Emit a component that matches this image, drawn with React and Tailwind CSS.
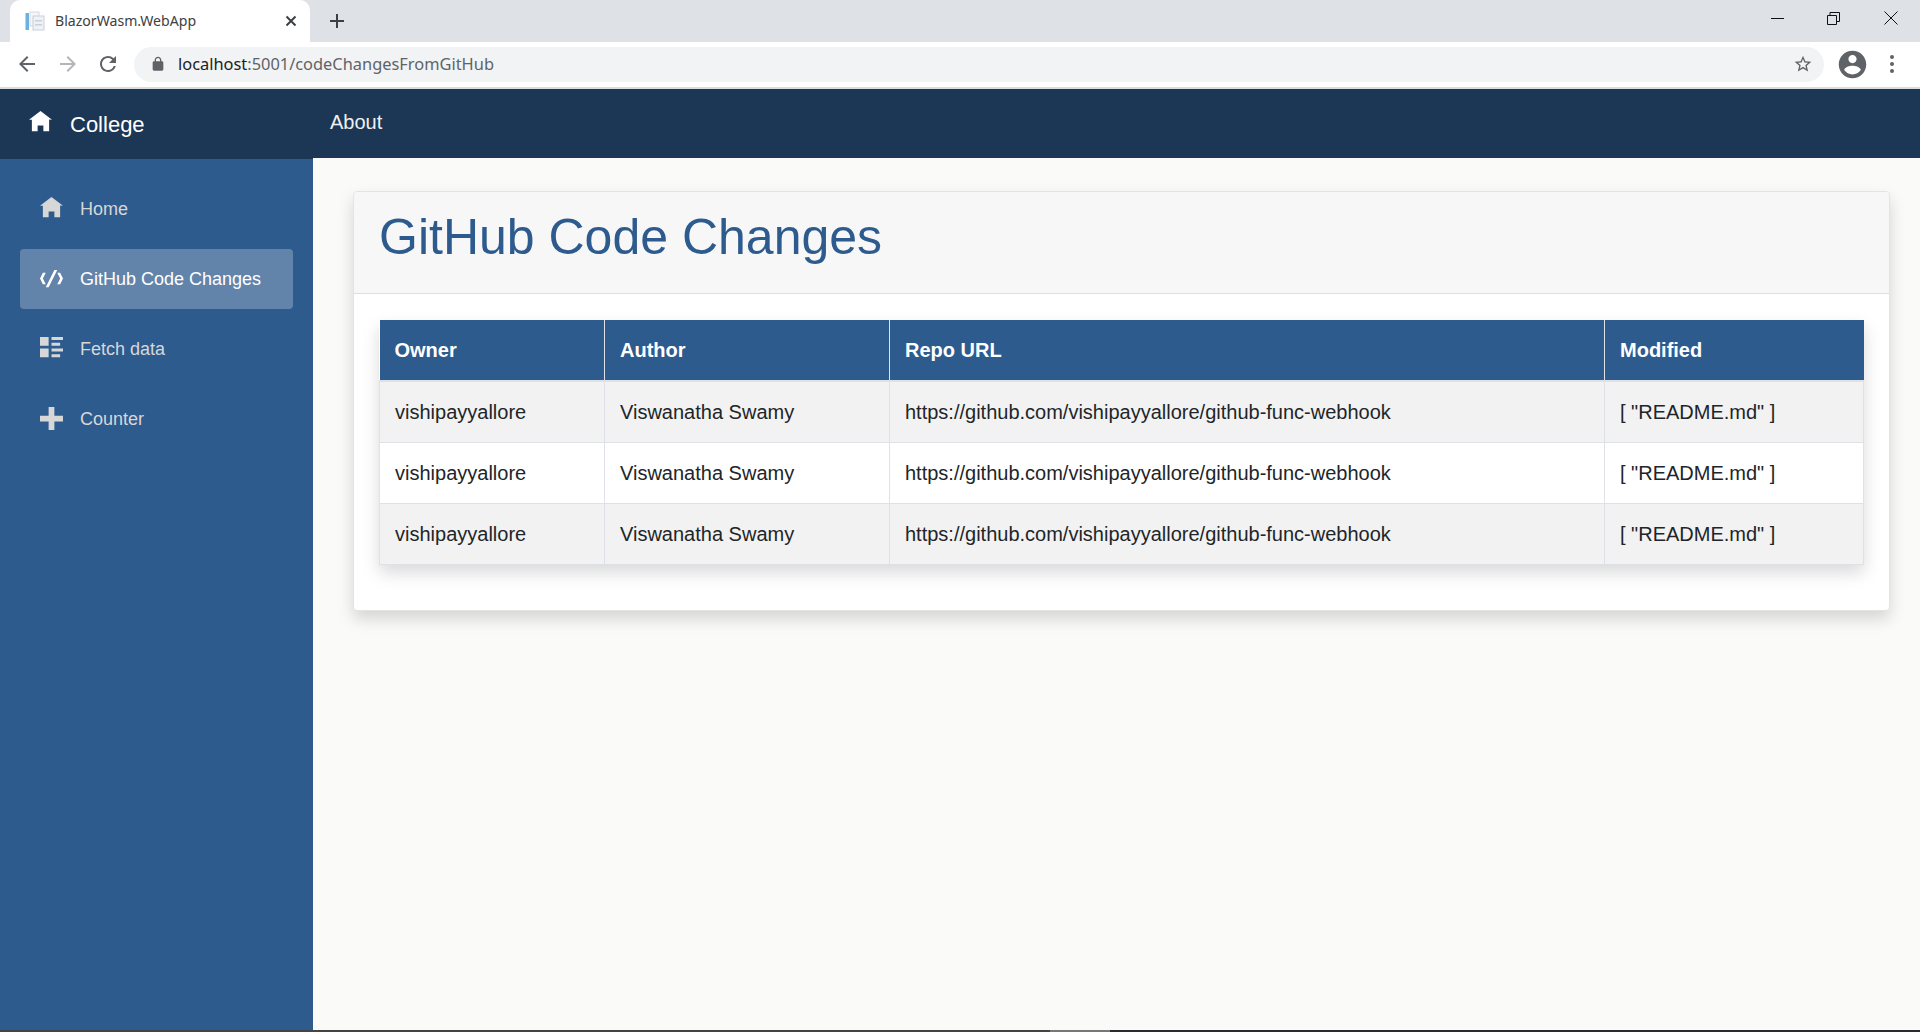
import React from 'react'

const rows = [
  { bg: 'bg-[#f2f2f2]' },
  { bg: 'bg-white' },
  { bg: 'bg-[#f2f2f2]' },
]

const navItems = [
  { label: 'Home', d: 'M4 0l-4 3h1v4h2v-2h2v2h2v-4.03l1 .03-4-3z' },
  { label: 'GitHub Code Changes', d: 'M5 0l-3 6h1l3-6h-1zm-4 1l-1 2 1 2h1l-1-2 1-2h-1zm5 0l1 2-1 2h1l1-2-1-2h-1z', active: true, code: true },
  { label: 'Fetch data', d: 'M0 0v3h3v-3h-3zm4 0v1h4v-1h-4zm0 2v1h3v-1h-3zm-4 2v3h3v-3h-3zm4 0v1h4v-1h-4zm0 2v1h3v-1h-3z' },
  { label: 'Counter', d: 'M3 0v3h-3v2h3v3h2v-3h3v-2h-3v-3h-2z' },
]

function Iconic({ d, className, code }) {
  return (
    <svg viewBox={code ? '0 -1 8 8' : '0 0 8 8'} className={className} fill="currentColor">
      <path d={d} />
    </svg>
  )
}

function Material({ d, className }) {
  return (
    <svg viewBox="0 0 24 24" className={className} fill="currentColor">
      <path d={d} />
    </svg>
  )
}

function BrowserChrome() {
  return (
    <div className="shrink-0 font-['Noto_Sans',sans-serif]">
      <div className="flex h-[42px] items-end bg-[#dee1e6]">
        <div className="ml-[10px] flex h-[42px] w-[300px] items-center rounded-t-[10px] bg-white pl-[15px] pr-[13px]">
          <svg viewBox="0 0 20 20" className="h-[20px] w-[20px] shrink-0">
            <rect x="0.5" y="2" width="3.5" height="17" fill="#6db1e3" />
            <rect x="5" y="1" width="9" height="14" fill="#f4f6f9" stroke="#d5dae1" strokeWidth="1" />
            <rect x="8" y="5" width="11" height="14" fill="#eef1f5" stroke="#c9d0d9" strokeWidth="1" />
            <rect x="10" y="9" width="7" height="1.5" fill="#c9d0d9" />
            <rect x="10" y="13" width="7" height="1.5" fill="#c9d0d9" />
          </svg>
          <span className="ml-[10px] flex-1 text-[14.1px] text-[#3c4043]">BlazorWasm.WebApp</span>
          <svg viewBox="0 0 12 12" className="h-[12px] w-[12px] text-[#3c4043]" fill="none" stroke="currentColor" strokeWidth="2">
            <path d="M1.5 1.5l9 9M10.5 1.5l-9 9" />
          </svg>
        </div>
        <div className="flex h-[42px] items-center pl-[19px]">
          <svg viewBox="0 0 16 16" className="h-[16px] w-[16px] text-[#3c4043]" fill="none" stroke="currentColor" strokeWidth="2">
            <path d="M8 1v14M1 8h14" />
          </svg>
        </div>
        <div className="ml-auto flex h-[42px] items-start pr-[1px] text-[#111]">
          <div className="flex h-[36px] w-[56px] items-center justify-center">
            <div className="h-px w-[13px] bg-current" />
          </div>
          <div className="flex h-[36px] w-[57px] items-center justify-center">
            <svg viewBox="0 0 13 13" className="h-[13px] w-[13px]" fill="none" stroke="currentColor">
              <path d="M0.5 3.5h9v9h-9zM3 3.5v-3h9.5v9h-3" />
            </svg>
          </div>
          <div className="flex h-[36px] w-[57px] items-center justify-center">
            <svg viewBox="0 0 14 14" className="h-[14px] w-[14px]" fill="none" stroke="currentColor">
              <path d="M0.5 0.5l13 13M13.5 0.5l-13 13" />
            </svg>
          </div>
        </div>
      </div>
      <div className="flex h-[47px] items-center border-b-2 border-[#dcdcdc] bg-white pb-[1px]">
        <Material className="ml-[15px] h-[24px] w-[24px] text-[#5f6368]" d="M20 11H7.83l5.59-5.59L12 4l-8 8 8 8 1.41-1.41L7.83 13H20v-2z" />
        <Material className="ml-[17px] h-[24px] w-[24px] rotate-180 text-[#b4b6b9]" d="M20 11H7.83l5.59-5.59L12 4l-8 8 8 8 1.41-1.41L7.83 13H20v-2z" />
        <Material className="ml-[16px] h-[24px] w-[24px] text-[#5f6368]" d="M17.65 6.35A7.96 7.96 0 0 0 12 4c-4.42 0-7.99 3.58-7.99 8s3.57 8 7.99 8c3.73 0 6.84-2.55 7.73-6h-2.08A5.99 5.99 0 0 1 12 18c-3.31 0-6-2.69-6-6s2.69-6 6-6c1.66 0 3.14.69 4.22 1.78L13 11h7V4l-2.35 2.35z" />
        <div className="ml-[14px] flex h-[35px] w-[1690px] items-center rounded-full bg-[#f1f3f4] pl-[16px] pr-[11px]">
          <Material className="h-[16px] w-[16px] text-[#5f6368]" d="M18 8h-1V6c0-2.76-2.24-5-5-5S7 3.24 7 6v2H6c-1.1 0-2 .9-2 2v10c0 1.1.9 2 2 2h12c1.1 0 2-.9 2-2V10c0-1.1-.9-2-2-2zM9 6c0-1.66 1.34-3 3-3s3 1.34 3 3v2H9V6z" />
          <span className="ml-[12px] mt-[1px] flex-1 text-[16.4px] text-[#5f6368]">
            <span className="text-[#202124]">localhost</span>:5001/codeChangesFromGitHub
          </span>
          <Material className="h-[20px] w-[20px] text-[#5f6368]" d="M22 9.24l-7.19-.62L12 2 9.19 8.63 2 9.24l5.46 4.73L5.82 21 12 17.27 18.18 21l-1.63-7.03L22 9.24zM12 15.4l-3.76 2.27 1-4.28-3.32-2.88 4.38-.38L12 6.1l1.71 4.04 4.38.38-3.32 2.88 1 4.28L12 15.4z" />
        </div>
        <Material className="ml-[12px] h-[33px] w-[33px] text-[#5f6368]" d="M12 2C6.48 2 2 6.48 2 12s4.48 10 10 10 10-4.48 10-10S17.52 2 12 2zm0 3c1.66 0 3 1.34 3 3s-1.34 3-3 3-3-1.34-3-3 1.34-3 3-3zm0 14.2c-2.5 0-4.71-1.28-6-3.22.03-1.99 4-3.08 6-3.08 1.99 0 5.97 1.09 6 3.08-1.29 1.94-3.5 3.22-6 3.22z" />
        <div className="ml-[21px] flex flex-col gap-[3px]">
          <div className="h-[4px] w-[4px] rounded-full bg-[#5f6368]" />
          <div className="h-[4px] w-[4px] rounded-full bg-[#5f6368]" />
          <div className="h-[4px] w-[4px] rounded-full bg-[#5f6368]" />
        </div>
      </div>
    </div>
  )
}

function Sidebar() {
  return (
    <aside className="flex w-[313px] shrink-0 flex-col border-t border-[#1c3655] bg-[#2d5b8e] pt-[20px]">
      <nav className="flex flex-col gap-[10px] px-[20px]">
        {navItems.map((item) => (
          <a
            key={item.label}
            className={`flex h-[60px] items-center rounded-[4px] pl-[20px] text-[18px] ${item.active ? 'bg-[#6384aa] text-white' : 'text-[#d7d7d7]'}`}
          >
            <Iconic d={item.d} code={item.code} className="-mt-[2px] h-[23px] w-[23px] shrink-0" />
            <span className="ml-[17px]">{item.label}</span>
          </a>
        ))}
      </nav>
    </aside>
  )
}

function CodeTable() {
  return (
    <table className="w-[1484px] table-fixed border-collapse text-[20px] text-[#212529] shadow-[0_8px_16px_rgba(0,0,0,0.15)]">
      <colgroup>
        <col className="w-[225px]" />
        <col className="w-[285px]" />
        <col className="w-[715px]" />
        <col className="w-[259px]" />
      </colgroup>
      <thead>
        <tr className="h-[61px] bg-[#2d5b8e] text-left text-white">
          <th className="border-b-2 border-r border-b-[#dee2e6] border-r-[#dee2e6] pl-[15px] font-bold">Owner</th>
          <th className="border-b-2 border-r border-b-[#dee2e6] border-r-[#dee2e6] pl-[15px] font-bold">Author</th>
          <th className="border-b-2 border-r border-b-[#dee2e6] border-r-[#dee2e6] pl-[15px] font-bold">Repo URL</th>
          <th className="border-b-2 border-b-[#dee2e6] pl-[15px] font-bold">Modified</th>
        </tr>
      </thead>
      <tbody>
        {rows.map((row, i) => (
          <tr key={i} className={`h-[61px] ${row.bg}`}>
            <td className="border border-[#dee2e6] pl-[15px]">vishipayyallore</td>
            <td className="border border-[#dee2e6] pl-[15px]">Viswanatha Swamy</td>
            <td className="border border-[#dee2e6] pl-[15px]">https://github.com/vishipayyallore/github-func-webhook</td>
            <td className="border border-[#dee2e6] pl-[15px]">[ "README.md" ]</td>
          </tr>
        ))}
      </tbody>
    </table>
  )
}

export default function App() {
  return (
    <div className="flex h-[1032px] flex-col overflow-hidden bg-[#fafaf8] font-['Liberation_Sans',sans-serif]">
      <BrowserChrome />
      <header className="flex h-[69px] shrink-0 items-center bg-[#1c3655] text-white">
        <div className="mt-[1px] flex w-[330px] items-center pl-[29px]">
          <Iconic d="M4 0l-4 3h1v4h2v-2h2v2h2v-4.03l1 .03-4-3z" className="-mt-[3px] h-[23px] w-[23px]" />
          <span className="ml-[18px] text-[22px]">College</span>
        </div>
        <span className="-mt-[4px] text-[20px] text-[#f0f0f0]">About</span>
      </header>
      <div className="flex flex-1">
        <Sidebar />
        <main className="flex-1 pl-[40px] pr-[30px] pt-[33px]">
          <section className="rounded-[4px] border border-[#e4e4e4] bg-white shadow-[0_8px_16px_rgba(0,0,0,0.15)]">
            <div className="flex h-[102px] items-center rounded-t-[4px] border-b border-[#dfdfdf] bg-[#f7f7f7] pb-[11px] pl-[25px]">
              <h1 className="text-[50px] leading-none text-[#2d5b8e]">GitHub Code Changes</h1>
            </div>
            <div className="pb-[45px] pl-[25px] pt-[26px]">
              <CodeTable />
            </div>
          </section>
        </main>
      </div>
      <div className="flex h-[2px] shrink-0 bg-[#2a2a30]">
        <div className="w-[1050px] bg-[#444]" />
        <div className="w-[60px] bg-[#777]" />
      </div>
    </div>
  )
}
